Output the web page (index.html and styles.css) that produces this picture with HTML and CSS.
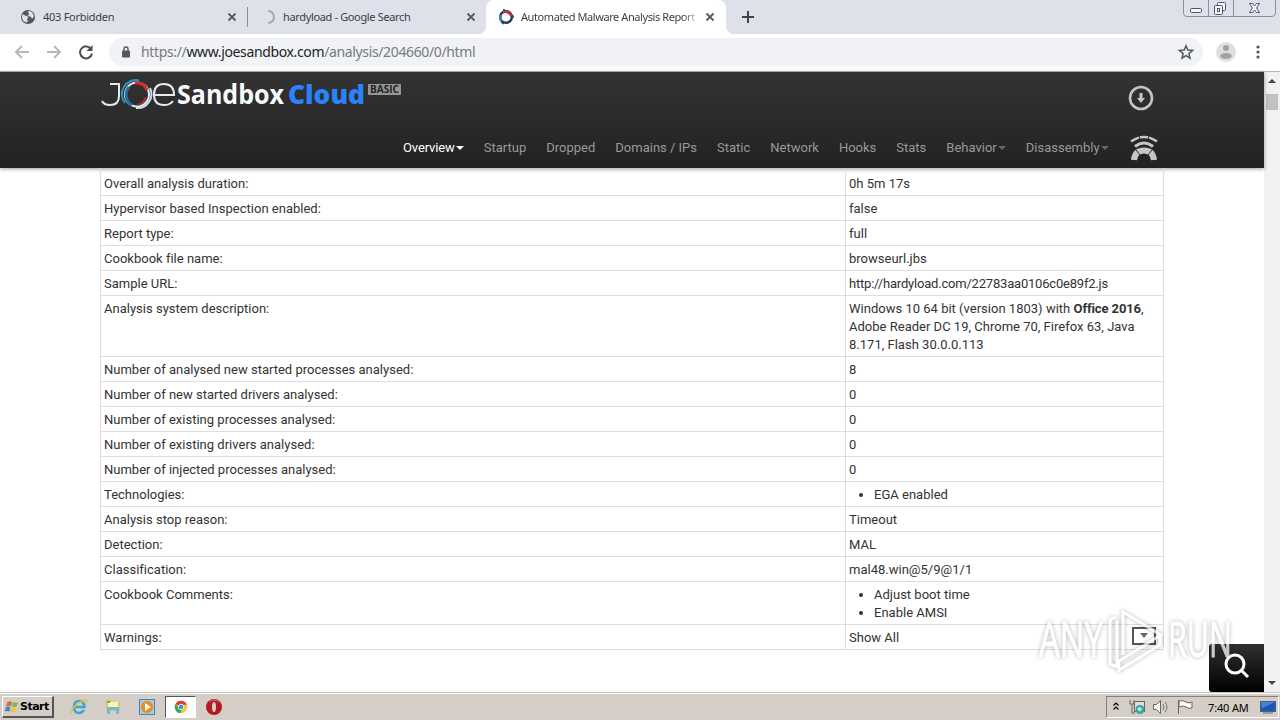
FILE: index.html
```
<!DOCTYPE html>
<html lang="en">
<head>
    <meta charset="UTF-8">
    <title>Automated Malware Analysis Report</title>
    <link rel="stylesheet" href="styles.css">
</head>
<body>
    <div class="tabs">
        <div class="tab">
            <svg class="favicon" viewBox="0 0 16 16"><circle cx="8" cy="8" r="7" fill="#53585f"/><path d="M2.500 5 5 6.500l2 .5 1.500 1.500L7 10l1 2-1.500 1.500C3.500 13 2 10.500 2 8zM8 2.500 9 5.500 7.500 7l3 .5 1.500 2 1.500-1C14.500 5.500 12 2.500 9.500 2z" fill="#dee1e9"/></svg>
            <span class="tab-title">403 Forbidden</span>
            <svg class="close" viewBox="0 0 10 10"><path d="M1.500 1.500l7 7M8.500 1.500l-7 7"/></svg>
        </div>
        <div class="tab second">
            <svg class="favicon" viewBox="0 0 16 16"><path d="M8 2a6 6 0 0 1 0 12" fill="none" stroke="#a5a9b0" stroke-width="2"/></svg>
            <span class="tab-title">hardyload - Google Search</span>
            <svg class="close" viewBox="0 0 10 10"><path d="M1.500 1.500l7 7M8.500 1.500l-7 7"/></svg>
        </div>
        <div class="tab active">
            <svg class="favicon" viewBox="0 0 16 16" fill="none" stroke-width="2.500"><circle cx="8" cy="8" r="5.800" stroke="#233d68"/><path d="M5 3.500A5.500 5.500 0 0 1 13 7" stroke="#c83347"/><path d="M3 6a5.500 5.500 0 0 0 1 6.500" stroke="#3c87ad"/><path d="M7 1.200 5 .5M14.500 6l.8 3M3 13l3 2" stroke="#233d68" stroke-width="1.500"/></svg>
            <span class="tab-title fade">Automated Malware Analysis Report</span>
            <svg class="close" viewBox="0 0 10 10"><path d="M1.500 1.500l7 7M8.500 1.500l-7 7"/></svg>
        </div>
        <svg class="new-tab" viewBox="0 0 12 12"><path d="M6 0v12M0 6h12"/></svg>
        <svg class="window-buttons" viewBox="0 0 93 17"><path d="M.5 0v13q0 3.500 3.500 3.500h85q3.500 0 3.500-3.500V0M25.500 0v16M50.500 0v16" stroke="#8b90a0" fill="none"/><g fill="#f5f6f9" stroke="#50566a"><rect x="7.500" y="8.500" width="11" height="4" rx="1"/><rect x="34.500" y="2.500" width="8" height="8" rx="1"/><rect x="31.500" y="5.500" width="8" height="9" rx="1"/><rect x="34.500" y="8.500" width="2" height="3"/><path d="M66.500 3.500h3l2 2.500 2-2.500h3L73.500 8l3 4.500h-3l-2-2.500-2 2.500h-3l3-4.500z"/></g></svg>
    </div>
    <div class="toolbar">
        <svg class="tool light" viewBox="0 0 16 16"><path d="M15 8H2M8 2 2 8l6 6"/></svg>
        <svg class="tool light" viewBox="0 0 16 16"><path d="M1 8h13M8 2l6 6-6 6"/></svg>
        <svg class="tool" viewBox="0 0 16 16"><path d="M13.200 5.200A6 6 0 1 0 14 9.500"/><path d="M14.500 1v6h-6z" fill="#4c5056" stroke="none"/></svg>
        <div class="address">
            <svg class="lock" viewBox="0 0 8 12"><rect y="4.500" width="8" height="7" rx="1" fill="#55595f"/><path d="M2 5V3a2 2 0 0 1 4 0v2" fill="none" stroke="#55595f" stroke-width="1.400"/></svg>
            <span class="url">https://<b>www.joesandbox.com</b>/analysis/204660/0/html</span>
            <svg class="star" viewBox="0 0 16 16"><path d="m8 1.800 1.800 4.300 4.700.4-3.600 3.100 1.100 4.600L8 11.700l-4 2.500 1.100-4.600-3.600-3.100 4.700-.4z"/></svg>
        </div>
        <svg class="avatar" viewBox="0 0 20 20"><circle cx="10" cy="10" r="10" fill="#dedfe1"/><circle cx="10" cy="6" r="3" fill="#9fa1a4"/><ellipse cx="10" cy="14" rx="5.800" ry="3" fill="#9fa1a4"/></svg>
        <svg class="dots" viewBox="0 0 4 14"><circle cx="2" cy="2" r="1.600"/><circle cx="2" cy="7" r="1.600"/><circle cx="2" cy="12" r="1.600"/></svg>
    </div>

    <div class="viewport">
        <div class="page">
            <header class="header">
                <div class="brand">
                    <svg class="logo" viewBox="0 0 302 34">
                        <g fill="none" stroke="#e9eaec" stroke-width="2"><path d="M10 6h9v12q0 9-9 9-6 0-8-4"/><circle cx="37" cy="16.500" r="12"/><path d="M54 17h20q0-11-10-11T54 16.500 64 27q6 0 9-4"/></g>
                        <g fill="none" stroke-width="2"><path d="M25 25A14 14 0 0 1 39 2.500" stroke="#2d8fc5"/><path d="M29 9a12 12 0 0 0 3 18" stroke="#246b9d" stroke-width="3"/><path d="M35 5q9-1 12 7" stroke="#d92832" stroke-width="3"/><path d="M50 10a14 14 0 0 1-14 20" stroke="#bfe3f5"/><path d="M46 19q-2 6-8 8" stroke="#b52b34"/></g>
                        <text class="sandbox" x="77" y="26" textLength="107" lengthAdjust="spacingAndGlyphs">Sandbox</text>
                        <text class="cloud" x="188" y="26" textLength="77" lengthAdjust="spacingAndGlyphs">Cloud</text>
                        <rect x="268" y="6" width="33" height="11" rx="1" fill="#969696"/>
                        <text class="basic" x="270" y="15" textLength="29" lengthAdjust="spacingAndGlyphs">BASIC</text>
                    </svg>
                    <svg class="download" viewBox="0 0 26 26"><circle cx="13" cy="13" r="11" fill="none" stroke="#c4c4c4" stroke-width="2.600"/><path d="M11.500 8h3v5H17l-4 5-4-5h2.500z" fill="#c4c4c4"/></svg>
                </div>
                <nav class="nav">
                    <a class="current caret">Overview</a>
                    <a>Startup</a>
                    <a>Dropped</a>
                    <a>Domains / IPs</a>
                    <a>Static</a>
                    <a>Network</a>
                    <a>Hooks</a>
                    <a>Stats</a>
                    <a class="caret">Behavior</a>
                    <a class="caret">Disassembly</a>
                    <svg class="signal" viewBox="0 0 28 26"><g fill="none" stroke="#c6c6c6"><path d="M1 6.500q13-9 26 0" stroke-width="2.500"/><path d="M5 11.500q9-7 18 0" stroke-width="3"/><path d="M4 25q1-9.500 10-9.500T24 25" stroke-width="6"/></g><path d="m6 15 4 5M22 15l-4 5M9 1l1 4M19 1l-1 4" stroke="#2a2a2a"/></svg>
                </nav>
            </header>
            <table class="info">
                <tr class="cut"><td></td><td></td></tr>
                <tr><td>Overall analysis duration:</td><td>0h 5m 17s</td></tr>
                <tr><td>Hypervisor based Inspection enabled:</td><td>false</td></tr>
                <tr><td>Report type:</td><td>full</td></tr>
                <tr><td>Cookbook file name:</td><td>browseurl.jbs</td></tr>
                <tr><td>Sample URL:</td><td class="link">http://hardyload.com/22783aa0106c0e89f2.js</td></tr>
                <tr><td>Analysis system description:</td><td>Windows 10 64 bit (version 1803) with <b>Office 2016</b>,<br>Adobe Reader DC 19, Chrome 70, Firefox 63, Java<br>8.171, Flash 30.0.0.113</td></tr>
                <tr><td>Number of analysed new started processes analysed:</td><td>8</td></tr>
                <tr><td>Number of new started drivers analysed:</td><td>0</td></tr>
                <tr><td>Number of existing processes analysed:</td><td>0</td></tr>
                <tr><td>Number of existing drivers analysed:</td><td>0</td></tr>
                <tr><td>Number of injected processes analysed:</td><td>0</td></tr>
                <tr><td>Technologies:</td><td><ul><li>EGA enabled</li></ul></td></tr>
                <tr><td>Analysis stop reason:</td><td>Timeout</td></tr>
                <tr><td>Detection:</td><td>MAL</td></tr>
                <tr><td>Classification:</td><td>mal48.win@5/9@1/1</td></tr>
                <tr><td>Cookbook Comments:</td><td><ul><li>Adjust boot time</li><li>Enable AMSI</li></ul></td></tr>
                <tr><td>Warnings:</td><td><div class="warnings">Show All <svg class="expand" viewBox="0 0 24 18"><rect x="1" y="1" width="22" height="16" fill="#fff" stroke="#555" stroke-width="2"/><path d="M8 6h8l-4 5z" fill="#666"/></svg></div></td></tr>
            </table>
            <div class="search"><svg viewBox="0 0 26 26"><circle cx="11" cy="11" r="9" /><path d="m18 18 6 6"/></svg></div>
            <svg class="watermark" viewBox="0 0 200 72">
                <text x="2" y="52" textLength="64" lengthAdjust="spacingAndGlyphs">ANY</text>
                <g fill="none" stroke="#fff" stroke-width="3"><path d="M79 12 73 15v44l7 3V15"/><path d="M86 50V7l38 23-42 26v9l41-25v-9"/></g>
                <text x="131" y="52" textLength="64" lengthAdjust="spacingAndGlyphs">RUN</text>
            </svg>
        </div>
        <div class="scrollbar">
            <svg viewBox="0 0 8 4"><path d="M0 4l4-4 4 4z"/></svg>
            <div class="thumb"></div>
            <svg class="down" viewBox="0 0 8 4"><path d="M0 0l4 4 4-4z"/></svg>
        </div>
    </div>

    <div class="taskbar">
        <div class="start">
            <svg viewBox="0 0 16 16"><path d="M3 2q3-1 5 0L7 7q-3-1-6 0z" fill="#e76532"/><path d="M9 2.500q3 1 6 0l-2 5q-2 1-5 0z" fill="#79b84b"/><path d="M1 8q3-1 5 0l-1 5q-2-1-5 0z" fill="#3686d2"/><path d="M7 8.500q3 1 6 0l-2 5q-2 1-5 0z" fill="#f4bd36"/></svg>
            <span>Start</span>
        </div>
        <svg class="task" viewBox="0 0 18 18"><path d="M14 12q-2 3-5 3-5 0-5-6t5-6 5.500 6H5" fill="none" stroke="#3ca6dc" stroke-width="2.600"/><path d="M2 15C-1 14 6 5 15 2q3 0 1 3" fill="none" stroke="#e9bd45" stroke-width="1.500"/></svg>
        <svg class="task" viewBox="0 0 18 18"><path d="M2 2h6l1 2h7v9H2z" fill="#e5c264"/><path d="M4 4h10v6H4z" fill="#fff3b1"/><path d="M3 9h12v7h-3v-4H6v4H3z" fill="#6dbbdc"/><path d="M3 3h3v2H3z" fill="#63b854"/></svg>
        <svg class="task" viewBox="0 0 18 18"><rect x="1.500" y="1.500" width="15" height="15" fill="#9bcbed" stroke="#4784b7"/><circle cx="9" cy="9" r="6" fill="#f08b16"/><path d="m7 5 6 4-6 4z" fill="#fff"/></svg>
        <div class="running"><svg viewBox="0 0 18 18"><circle cx="9" cy="9" r="8" fill="#f1c934"/><path d="M9 9 2 5a8 8 0 0 1 14.500 1H9z" fill="#d94235"/><path d="M2 5a8 8 0 0 0 6 12l3-7H6z" fill="#36a653"/><circle cx="9" cy="9" r="3.500" fill="#4587e9" stroke="#fff"/></svg></div>
        <svg class="task opera" viewBox="0 0 18 18"><circle cx="9" cy="9" r="8" fill="#b51822"/><ellipse cx="9" cy="9" rx="2" ry="5" fill="#d8cfc7"/><path d="M4 4q5-4 10 0" stroke="#df6b70" fill="none"/></svg>
        <div class="tray">
            <svg class="chevrons" viewBox="0 0 6 8"><path d="m.5 3.500 2.500-2.500 2.500 2.500M.5 7.500 3 5l2.500 2.500"/></svg>
            <svg class="tray-icon" viewBox="0 0 16 16"><path d="M1 1v4h4V1M3 5v9h3" fill="none" stroke="#666"/><rect x="5.500" y="2.500" width="10" height="10" fill="#ddd" stroke="#666"/><circle cx="11" cy="10.500" r="4.500" fill="#35a79d"/><path d="M8 10q3-4 5 0-1 3-3 2" fill="#b7e6d7"/></svg>
            <svg class="tray-icon sound" viewBox="0 0 16 16"><path d="M.5 5.500h3l4-4v13l-4-4h-3z" fill="#f4f4f4" stroke="#666"/><path d="M10 5q2 3 0 6M12 3q4 5 0 10" fill="none" stroke="#777"/></svg>
            <svg class="tray-icon flag" viewBox="0 0 16 16"><path d="M1.500 1v14M2 2q4-1 7 1t6 0v6q-4 1-6-1T2 8z" fill="#fafafa" stroke="#666"/></svg>
            <span class="clock">7:40 AM</span>
            <svg class="desktop" viewBox="0 0 16 14"><rect x=".5" y="1.500" width="15" height="10" fill="#1e56b4" stroke="#4f5f78"/><path d="M1 2h14L2 8z" fill="#4185dd"/><path d="M3 13h10" stroke="#5b6677"/></svg>
        </div>
    </div>
</body>
</html>
```
FILE: styles.css
```
* {
    box-sizing: border-box;
}

body {
    display: flex;
    flex-direction: column;
    width: 1280px;
    height: 720px;
    margin: 0;
    overflow: hidden;
    background: #fff;
    font-family: Roboto, sans-serif;
    font-size: 13px;
    color: #333;
}

svg {
    display: block;
    flex: none;
}

/* browser */
.tabs {
    display: flex;
    flex: none;
    height: 34px;
    background: #dee1e9;
}

.tab {
    display: flex;
    align-items: center;
    width: 248px;
    padding: 0 0 0 20px;
    position: relative;
}

.tab:first-child::after {
    content: "";
    width: 1px;
    height: 20px;
    margin-left: 10px;
    background: #898d95;
}

.tab.second {
    width: 238px;
    padding: 0 10px 0 12px;
}

.tab.active {
    width: 240px;
    padding: 0 11px 0 12px;
    background: #fff;
    border-radius: 8px 8px 0 0;
}

.tab.active::before,
.tab.active::after {
    content: "";
    position: absolute;
    bottom: 0;
    left: -8px;
    width: 8px;
    height: 8px;
    background: radial-gradient(circle at 0 0, transparent 8px, #fff 8px);
}

.tab.active::after {
    left: auto;
    right: -8px;
    background: radial-gradient(circle at 100% 0, transparent 8px, #fff 8px);
}

.favicon {
    width: 16px;
    height: 16px;
    margin-right: 7px;
}

.tab-title {
    padding-bottom: 1px;
    font-family: "Noto Sans", sans-serif;
    font-size: 11px;
    letter-spacing: -0.270px;
    white-space: nowrap;
    color: #3b3f45;
}

.tab.second .tab-title {
    letter-spacing: -0.350px;
}

.tab .fade {
    letter-spacing: -0.420px;
    -webkit-mask-image: linear-gradient(90deg, #000 93%, rgba(0, 0, 0, 0.3));
}

.close {
    width: 10px;
    height: 10px;
    margin-left: auto;
    fill: none;
    stroke: #55595f;
    stroke-width: 1.800;
}

.new-tab {
    width: 12px;
    height: 12px;
    margin: 11px 0 0 16px;
    stroke: #3c4047;
    stroke-width: 2;
}

.window-buttons {
    width: 93px;
    height: 17px;
    margin-left: auto;
    margin-right: 4px;
}

.toolbar {
    display: flex;
    flex: none;
    align-items: center;
    height: 38px;
    padding: 0 20px 1px 14px;
    border-bottom: 1px solid #b3b5b5;
}

.tool {
    width: 16px;
    height: 16px;
    margin-right: 16px;
    fill: none;
    stroke: #4c5056;
    stroke-width: 2;
}

.light {
    stroke: #b6b8bb;
}

.address {
    display: flex;
    align-items: center;
    width: 1094px;
    height: 28px;
    margin-left: -1px;
    padding: 0 9px 0 13px;
    border-radius: 14px;
    background: #f0f2f5;
}

.lock {
    width: 8px;
    height: 12px;
}

.url {
    margin-left: 11px;
    padding-bottom: 1px;
    font-family: "Noto Sans", sans-serif;
    font-size: 14px;
    letter-spacing: -0.360px;
    white-space: nowrap;
    color: #777b80;
}

.url b {
    font-weight: 400;
    color: #202327;
}

.star {
    width: 16px;
    height: 16px;
    margin-left: auto;
    fill: none;
    stroke: #54585e;
    stroke-width: 1.500;
}

.avatar {
    width: 20px;
    height: 20px;
    margin-left: 13px;
}

.dots {
    width: 4px;
    height: 14px;
    margin-left: auto;
    fill: #53575d;
}

.viewport {
    display: flex;
    height: 620px;
    flex: none;
}

.page {
    position: relative;
    width: 1264px;
}

/* report header */
.header {
    height: 96px;
    padding: 6px 106px 0 100px;
    background: linear-gradient(#333, #222);
    box-shadow: 0 1px 4px rgba(0, 0, 0, 0.4);
}

.brand {
    display: flex;
    justify-content: space-between;
}

.logo {
    width: 302px;
    height: 34px;
}

.sandbox,
.cloud {
    font-family: "Open Sans", sans-serif;
    font-size: 26px;
    font-weight: 700;
    fill: #f7fafc;
}

.cloud {
    font-weight: 800;
    fill: #2a83fa;
}

.basic {
    font-family: "Open Sans", sans-serif;
    font-size: 10px;
    font-weight: 700;
    fill: #222;
}

.download {
    width: 26px;
    height: 26px;
    margin: 7px 4px 0 0;
}

.nav {
    display: flex;
    align-items: center;
    gap: 20px;
    height: 26px;
    margin: 22px 0 0 303px;
    white-space: nowrap;
    color: #999;
}

.nav a {
    display: flex;
    align-items: center;
}

.nav .current {
    letter-spacing: -0.120px;
    color: #fff;
}

.caret::after {
    content: "";
    margin: 2px 0 0 1px;
    border: 4px solid transparent;
    border-top-color: currentColor;
    border-bottom: 0;
}

.nav .caret:not(.current)::after {
    border-top-color: #666;
}

.signal {
    width: 28px;
    height: 26px;
    margin: 1px 0 0 auto;
}

/* report table */
.info {
    width: 1064px;
    margin-left: 100px;
    border-left: 1px solid #ddd;
    border-spacing: 0;
    table-layout: fixed;
    letter-spacing: 0.010px;
    line-height: 18px;
}

.info td {
    padding: 4px 3px 2px;
    border-right: 1px solid #ddd;
    border-bottom: 1px solid #ddd;
    vertical-align: top;
}

.info td:first-child {
    width: 745px;
}

.info .cut td {
    height: 3px;
    padding: 0;
}

.info .link {
    letter-spacing: -0.200px;
}

.info b {
    letter-spacing: -0.100px;
}

.info ul {
    margin: 0;
    padding-left: 25px;
}

.warnings {
    display: flex;
    justify-content: space-between;
    height: 18px;
}

.expand {
    width: 24px;
    height: 18px;
    margin: -2px 4px 0 0;
}

.search {
    position: absolute;
    right: 0;
    bottom: 0;
    width: 55px;
    height: 48px;
    padding: 9px 0 0 15px;
    border-radius: 3px 0 0 3px;
    background: linear-gradient(#303030, #000);
}

.search svg {
    width: 26px;
    height: 26px;
    fill: none;
    stroke: #fff;
    stroke-width: 3;
}

.watermark {
    position: absolute;
    left: 1037px;
    top: 533px;
    width: 200px;
    height: 72px;
    overflow: visible;
    fill: #fff;
    opacity: 0.75;
    filter: drop-shadow(0 0 2px rgba(0, 0, 0, 0.4));
}

.watermark text {
    font-family: "Open Sans", sans-serif;
    font-size: 50px;
    stroke: #fff;
    stroke-width: 1;
}

.scrollbar {
    display: flex;
    flex-direction: column;
    align-items: center;
    width: 16px;
    padding: 7px 0;
    background: #f1f1f1;
}

.scrollbar svg {
    width: 8px;
    height: 4px;
    fill: #444;
}

.thumb {
    width: 12px;
    height: 16px;
    margin-top: 11px;
    background: #c1c1c1;
}

.scrollbar .down {
    margin-top: auto;
}

/* windows taskbar */
.taskbar {
    display: flex;
    flex: none;
    align-items: center;
    height: 28px;
    padding: 1px 1px 0 2px;
    border-top: 1px solid #c5c3be;
    box-shadow: inset 0 1px #fff;
    background: #d4cec6;
}

.start {
    display: flex;
    align-items: center;
    width: 52px;
    height: 22px;
    padding-left: 2px;
    border: 1px solid #fff;
    border-right: 2px solid #555;
    border-bottom: 2px solid #555;
    font-family: "DejaVu Sans", sans-serif;
    font-size: 11px;
    font-weight: 700;
    letter-spacing: -0.500px;
    color: #000;
}

.start svg {
    width: 14px;
    height: 16px;
    margin-right: 1px;
}

.task {
    width: 18px;
    height: 18px;
    margin-left: 16px;
}

.start + .task {
    margin-left: 16px;
}

.running {
    display: flex;
    align-items: center;
    justify-content: center;
    width: 31px;
    height: 22px;
    margin-left: 9px;
    border: 1px solid #555;
    border-right-color: #fff;
    border-bottom-color: #fff;
    background: #fff;
}

.running svg {
    width: 14px;
    height: 14px;
}

.opera {
    margin-left: 9px;
}

.tray {
    display: flex;
    align-items: center;
    width: 173px;
    height: 22px;
    margin-left: auto;
    padding: 0 2px 0 6px;
    border: 1px solid #85817a;
    border-right-color: #fff;
    border-bottom-color: #fff;
}

.chevrons {
    width: 6px;
    height: 8px;
    margin-bottom: 2px;
    fill: none;
    stroke: #000;
    stroke-width: 1.200;
}

.tray-icon {
    width: 16px;
    height: 16px;
    margin-left: 10px;
}

.sound,
.flag {
    margin-left: 8px;
}

.clock {
    width: 42px;
    margin: 0 10px 0 auto;
    font-family: "Noto Sans", sans-serif;
    font-size: 11px;
    letter-spacing: -0.150px;
    white-space: nowrap;
    color: #000;
}

.desktop {
    width: 16px;
    height: 14px;
}
```
